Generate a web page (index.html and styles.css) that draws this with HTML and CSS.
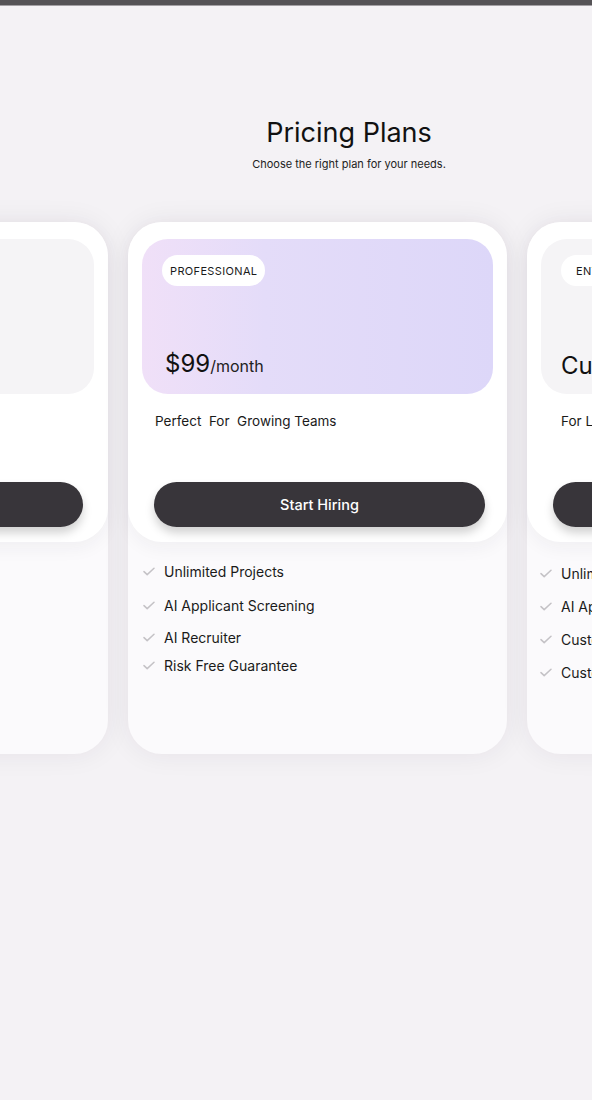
FILE: index.html
```html
<!DOCTYPE html>
<html lang="en">
<head>
<meta charset="utf-8">
<title>Pricing Plans</title>
<link rel="stylesheet" href="styles.css">
</head>
<body>
<div class="topbar"></div>
<header class="header">
  <h1 class="title">Pricing Plans</h1>
  <p class="subtitle">Choose the right plan for your needs.</p>
</header>
<section class="cards">
  <article class="card card--left">
    <div class="card-top">
      <div class="plan-box plan-box--grey">
        <span class="badge">STARTER</span>
        <div class="price">$49<span class="per">/month</span></div>
      </div>
      <p class="desc">Perfect&nbsp; For&nbsp; Small Teams</p>
      <button class="cta">Start Hiring</button>
    </div>
    <ul class="features">
      <li><svg class="check" viewBox="0 0 12 9"><path d="M1 4.6 L4.2 7.6 L11 1.2"/></svg>Up to 5 Projects</li>
      <li><svg class="check" viewBox="0 0 12 9"><path d="M1 4.6 L4.2 7.6 L11 1.2"/></svg>AI Applicant Screening</li>
    </ul>
  </article>

  <article class="card card--mid">
    <div class="card-top">
      <div class="plan-box plan-box--purple">
        <span class="badge">PROFESSIONAL</span>
        <div class="price">$99<span class="per">/month</span></div>
      </div>
      <p class="desc">Perfect&nbsp; For&nbsp; Growing Teams</p>
      <button class="cta">Start Hiring</button>
    </div>
    <ul class="features">
      <li><svg class="check" viewBox="0 0 12 9"><path d="M1 4.6 L4.2 7.6 L11 1.2"/></svg>Unlimited Projects</li>
      <li><svg class="check" viewBox="0 0 12 9"><path d="M1 4.6 L4.2 7.6 L11 1.2"/></svg>AI Applicant Screening</li>
      <li><svg class="check" viewBox="0 0 12 9"><path d="M1 4.6 L4.2 7.6 L11 1.2"/></svg>AI Recruiter</li>
      <li><svg class="check" viewBox="0 0 12 9"><path d="M1 4.6 L4.2 7.6 L11 1.2"/></svg>Risk Free Guarantee</li>
    </ul>
  </article>

  <article class="card card--right">
    <div class="card-top">
      <div class="plan-box plan-box--grey">
        <span class="badge">ENTERPRISE</span>
        <div class="price">Custom</div>
      </div>
      <p class="desc">For Large Organizations</p>
      <button class="cta">Contact Sales</button>
    </div>
    <ul class="features">
      <li><svg class="check" viewBox="0 0 12 9"><path d="M1 4.6 L4.2 7.6 L11 1.2"/></svg>Unlimited Projects</li>
      <li><svg class="check" viewBox="0 0 12 9"><path d="M1 4.6 L4.2 7.6 L11 1.2"/></svg>AI Applicant Screening</li>
      <li><svg class="check" viewBox="0 0 12 9"><path d="M1 4.6 L4.2 7.6 L11 1.2"/></svg>Custom Integrations</li>
      <li><svg class="check" viewBox="0 0 12 9"><path d="M1 4.6 L4.2 7.6 L11 1.2"/></svg>Custom Support</li>
    </ul>
  </article>
</section>
</body>
</html>
```
FILE: styles.css
```css
* { box-sizing: border-box; }

html, body {
  margin: 0;
  padding: 0;
}

body {
  background: #f4f2f5;
  font-family: Inter, "Noto Sans", "Liberation Sans", sans-serif;
  color: #151416;
  width: 592px;
  height: 1100px;
  overflow: hidden;
}

.topbar {
  height: 6px;
  background: #555356;
  border-bottom: 1px solid #a3a0a4;
}

.header {
  padding: 111px 0 0 106px;
  text-align: center;
}

.title {
  margin: 0;
  font-size: 27px;
  font-weight: 400;
  line-height: 32px;
  letter-spacing: 0;
  color: #111;
}

.subtitle {
  margin: 8px 0 0;
  font-size: 11px;
  line-height: 14px;
  color: #222;
}

.cards {
  display: flex;
  gap: 20px;
  margin: 51px 0 0 -271px;
}

.card {
  flex: 0 0 379px;
  height: 532px;
  border-radius: 34px;
  background: #fbfafc;
  box-shadow: 0 0 28px rgba(40, 30, 50, 0.07);
}

.card-top {
  background: #ffffff;
  border-radius: 34px;
  height: 320px;
  padding: 17px 14px 0;
  box-shadow: 0 6px 18px rgba(40, 30, 50, 0.05);
  display: flex;
  flex-direction: column;
}

.plan-box {
  height: 155px;
  border-radius: 26px;
  padding: 16px 20px 0;
  display: flex;
  flex-direction: column;
  align-items: flex-start;
}

.plan-box--purple {
  background: linear-gradient(90deg, #f0e0f8 0%, #e4dcf9 35%, #ddd7f9 100%);
}

.plan-box--grey {
  background: #f5f4f6;
}

.badge {
  display: inline-flex;
  align-items: center;
  height: 31px;
  padding: 0 8px;
  border-radius: 16px;
  background: #ffffff;
  font-size: 11px;
  letter-spacing: 0.35px;
  color: #1a1a1a;
}

.price {
  margin-top: auto;
  margin-bottom: 14px;
  padding-left: 3px;
  font-size: 24px;
  line-height: 28px;
  color: #111;
}

.per {
  font-size: 16px;
  color: #222;
}

.desc {
  margin: 19px 0 0 13px;
  font-size: 13.5px;
  line-height: 16px;
  color: #1a1a1a;
}

.cta {
  margin: auto 8px 15px 12px;
  height: 45px;
  border: 0;
  border-radius: 23px;
  background: #38353a;
  color: #ffffff;
  font-family: inherit;
  font-size: 14.5px;
  font-weight: 500;
  box-shadow: 0 6px 10px rgba(0, 0, 0, 0.18);
}

.features {
  list-style: none;
  margin: 0;
  padding: 20px 0 0 15px;
  display: flex;
  flex-direction: column;
  gap: 15px;
}

.features li {
  display: flex;
  align-items: center;
  gap: 9px;
  height: 18px;
  font-size: 14px;
  color: #1a1a1a;
}

.card--mid .features {
  gap: 0;
}

.card--mid .features li:nth-child(2) { margin-top: 16px; }
.card--mid .features li:nth-child(3) { margin-top: 14px; }
.card--mid .features li:nth-child(4) { margin-top: 10px; }

.check {
  width: 12px;
  height: 9px;
  fill: none;
  stroke: #c4c2c6;
  stroke-width: 1.5;
  stroke-linecap: round;
  stroke-linejoin: round;
}

.card--left .cta {
  margin-right: 11px;
}

.card--right .badge {
  padding: 0 15px;
}

.card--right .price {
  padding-left: 0;
}

.card--right .desc {
  margin-left: 20px;
}

.card--right .features {
  padding-left: 13px;
  padding-top: 22px;
}
```
